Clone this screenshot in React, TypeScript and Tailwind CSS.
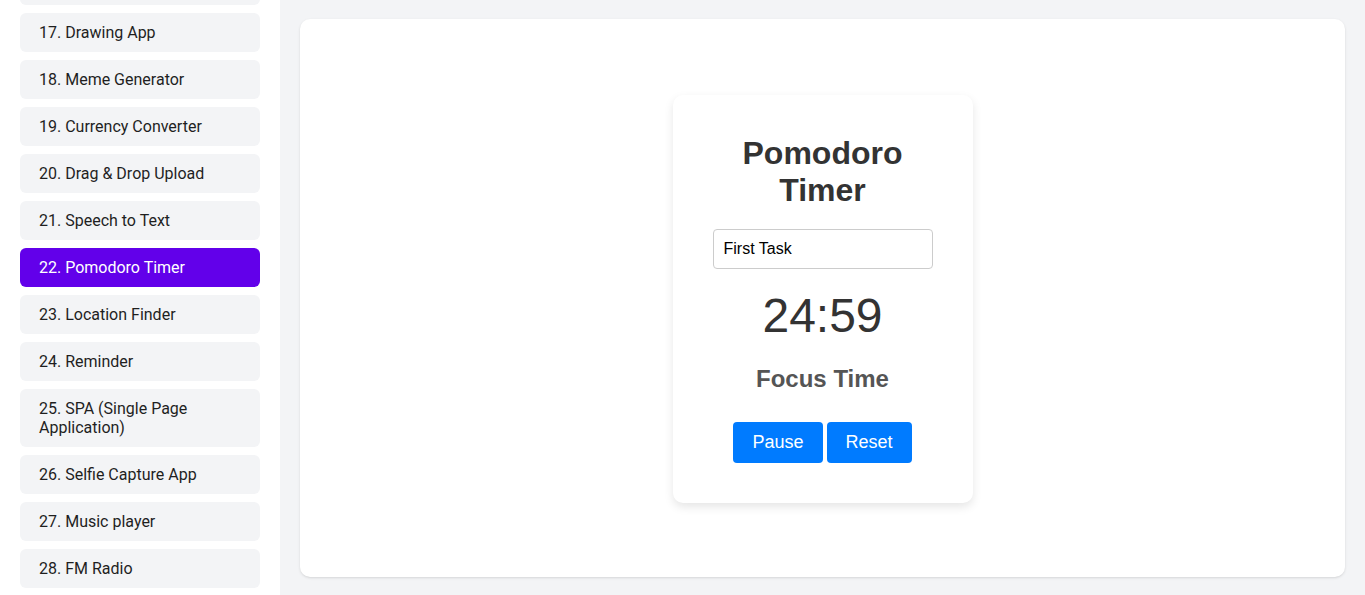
import { useLayoutEffect, useRef } from "react"

const projects = [
  "Calculator",
  "Todo List",
  "Weather App",
  "Quiz App",
  "Stopwatch",
  "Digital Clock",
  "Image Slider",
  "Tic Tac Toe",
  "Password Generator",
  "Expense Tracker",
  "Notes App",
  "Color Picker",
  "BMI Calculator",
  "QR Code Generator",
  "Recipe Finder",
  "Chat App",
  "Drawing App",
  "Meme Generator",
  "Currency Converter",
  "Drag & Drop Upload",
  "Speech to Text",
  "Pomodoro Timer",
  "Location Finder",
  "Reminder",
  "SPA (Single Page Application)",
  "Selfie Capture App",
  "Music player",
  "FM Radio",
  "Video Player",
  "Portfolio",
]

const Sidebar = () => {
  const listRef = useRef<HTMLDivElement>(null)
  const anchorRef = useRef<HTMLDivElement>(null)

  useLayoutEffect(() => {
    if (listRef.current && anchorRef.current) {
      listRef.current.scrollTop = anchorRef.current.offsetTop - 13
    }
  }, [])

  return (
    <div
      ref={listRef}
      className="relative w-[280px] shrink-0 bg-white overflow-hidden font-['Roboto',sans-serif]"
    >
      <div className="flex flex-col gap-2 p-5">
        {projects.map((name, i) => {
          const active = i === 21
          return (
            <div
              key={name}
              ref={i === 16 ? anchorRef : undefined}
              className={
                active
                  ? "rounded-md bg-[#6200ea] pl-[19px] pr-5 py-[10px] text-base leading-[normal] text-white"
                  : "rounded-md bg-[#f3f4f6] pl-[19px] pr-5 py-[10px] text-base leading-[normal] text-[#1f1f1f]"
              }
            >
              {i + 1}. {name}
            </div>
          )
        })}
      </div>
    </div>
  )
}

const PomodoroCard = () => {
  return (
    <div className="w-[300px] rounded-[10px] bg-white px-10 pt-10 pb-10 text-center shadow-[0_4px_10px_rgba(0,0,0,0.1)] font-['Liberation_Sans',Arial,sans-serif]">
      <h1 className="mb-5 text-[32px] font-bold leading-[1.15] text-[#333]">
        Pomodoro Timer
      </h1>
      <input
        defaultValue="First Task"
        className="block h-[40px] w-[220px] rounded-[4px] border border-[#ccc] px-[10px] text-base text-black outline-none"
      />
      <div className="mt-[19px] text-[48px] leading-[1.15] text-[#333]">24:59</div>
      <h2 className="mt-[22px] text-2xl font-bold leading-[1.15] text-[#555]">Focus Time</h2>
      <div className="mt-[30px] flex justify-center gap-1">
        <button className="rounded-[4px] bg-[#007bff] px-[19px] py-[10px] text-lg leading-[1.15] text-white">
          Pause
        </button>
        <button className="rounded-[4px] bg-[#007bff] px-[19px] py-[10px] text-lg leading-[1.15] text-white">
          Reset
        </button>
      </div>
    </div>
  )
}

export default function App() {
  return (
    <div className="flex h-screen overflow-hidden">
      <Sidebar />
      <main className="flex-1 bg-[#f3f4f6] px-5 pt-[19px] pb-[18px]">
        <div className="flex h-full items-center justify-center rounded-[10px] bg-white pt-[2px] shadow-sm">
          <PomodoroCard />
        </div>
      </main>
    </div>
  )
}
